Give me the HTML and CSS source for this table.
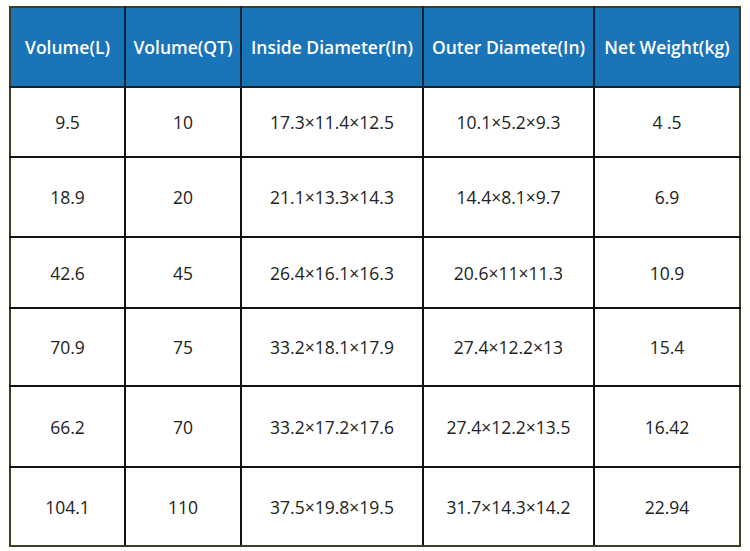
FILE: index.html
```html
<!DOCTYPE html>
<html>
<head>
<meta charset="utf-8">
<link rel="stylesheet" href="styles.css">
</head>
<body>
<div class="wrap">
<table class="spec">
<colgroup>
<col class="c1"><col class="c2"><col class="c3"><col class="c4"><col class="c5">
</colgroup>
<thead>
<tr class="rh"><th>Volume(L)</th><th>Volume(QT)</th><th>Inside Diameter(In)</th><th>Outer Diamete(In)</th><th>Net Weight(kg)</th></tr>
</thead>
<tbody>
<tr class="r1"><td>9.5</td><td>10</td><td>17.3×11.4×12.5</td><td>10.1×5.2×9.3</td><td>4 .5</td></tr>
<tr class="r2"><td>18.9</td><td>20</td><td>21.1×13.3×14.3</td><td>14.4×8.1×9.7</td><td>6.9</td></tr>
<tr class="r3"><td>42.6</td><td>45</td><td>26.4×16.1×16.3</td><td>20.6×11×11.3</td><td>10.9</td></tr>
<tr class="r4"><td>70.9</td><td>75</td><td>33.2×18.1×17.9</td><td>27.4×12.2×13</td><td>15.4</td></tr>
<tr class="r5"><td>66.2</td><td>70</td><td>33.2×17.2×17.6</td><td>27.4×12.2×13.5</td><td>16.42</td></tr>
<tr class="r6"><td>104.1</td><td>110</td><td>37.5×19.8×19.5</td><td>31.7×14.3×14.2</td><td>22.94</td></tr>
</tbody>
</table>
</div>
</body>
</html>
```
FILE: styles.css
```css
html, body {
  margin: 0;
  padding: 0;
  background: #ffffff;
}
.wrap {
  padding: 6px 0 0 9px;
}
.spec {
  border-collapse: collapse;
  table-layout: fixed;
  width: 732px;
  border: 2px solid #3e3e27;
  font-family: "Open Sans", "Noto Sans", sans-serif;
  font-size: 17.5px;
  color: #222;
}
.c1 { width: 115px; }
.c2 { width: 116px; }
.c3 { width: 182px; }
.c4 { width: 171px; }
.c5 { width: 146px; }
.spec th, .spec td {
  border: 2px solid #111;
  text-align: center;
  vertical-align: middle;
  padding: 0;
  white-space: nowrap;
}
.spec th {
  background: #1a74b8;
  color: #fff;
  font-weight: 600;
  border-color: #0e2438;
}
.spec tr:first-child th { border-top-color: #3e3e27; }
.spec th:first-child, .spec td:first-child { border-left-color: #3e3e27; }
.spec th:last-child, .spec td:last-child { border-right-color: #3e3e27; }
.spec tr:last-child td { border-bottom-color: #3e3e27; }
.rh { height: 80px; }
.r1 { height: 70px; }
.r2 { height: 80px; }
.r3 { height: 71px; }
.r4 { height: 78px; }
.r5 { height: 81px; }
.r6 { height: 79px; }
```
